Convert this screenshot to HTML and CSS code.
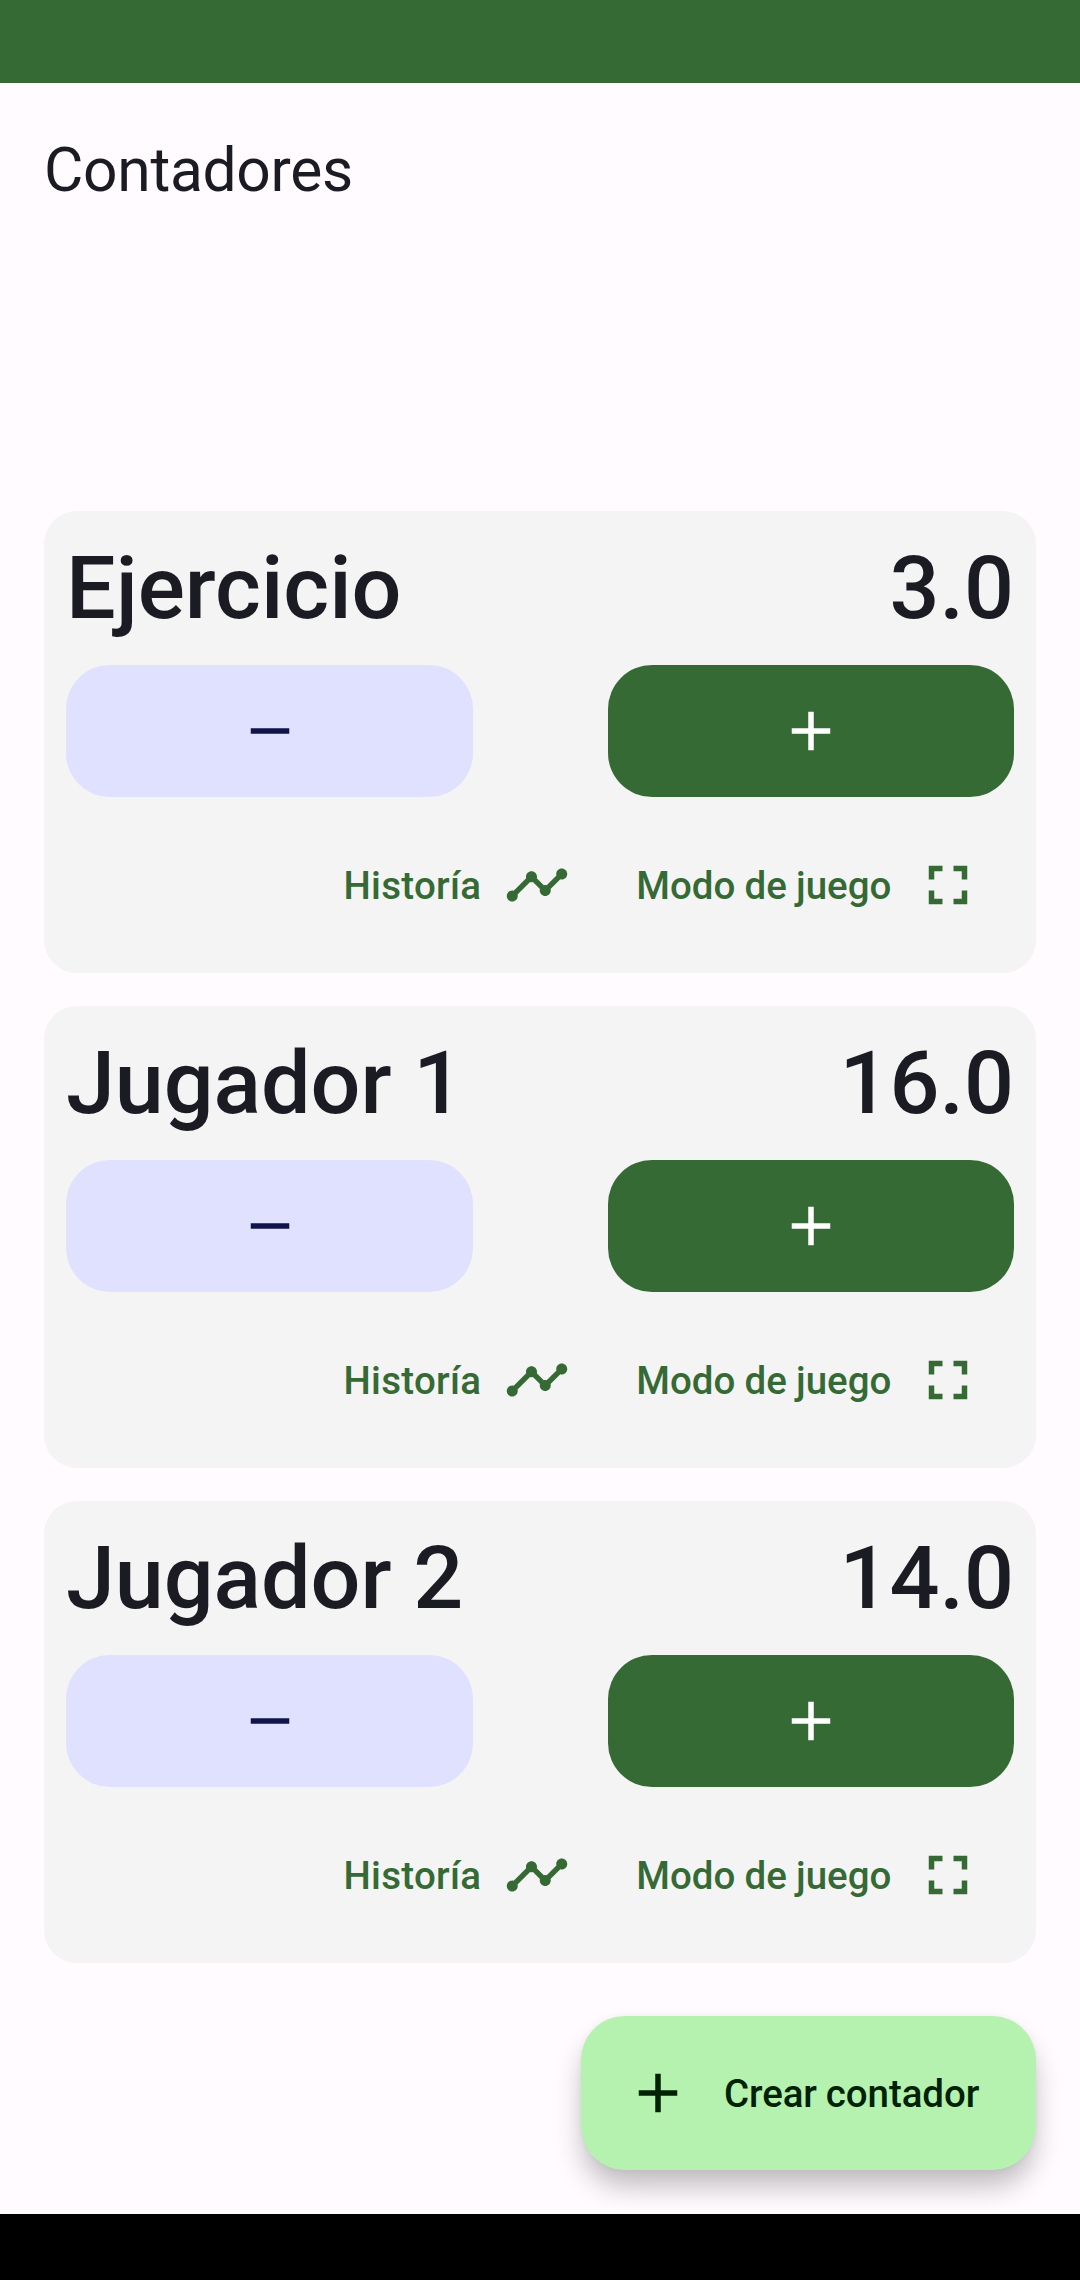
FILE: index.html
```html
<!DOCTYPE html>
<html lang="es">
<head>
<meta charset="utf-8">
<title>Contadores</title>
<link rel="stylesheet" href="styles.css">
</head>
<body>
<svg class="sprite" aria-hidden="true">
  <symbol id="minus" viewBox="0 0 24 24"><path d="M19 13H5v-2h14v2z"/></symbol>
  <symbol id="plus" viewBox="0 0 24 24"><path d="M19 13h-6v6h-2v-6H5v-2h6V5h2v6h6v2z"/></symbol>
  <symbol id="timeline" viewBox="0 0 24 24"><path d="M23 8c0 1.1-.9 2-2 2-.18 0-.35-.02-.51-.07l-3.56 3.55c.05.16.07.34.07.52 0 1.1-.9 2-2 2s-2-.9-2-2c0-.18.02-.36.07-.52l-2.55-2.55c-.16.05-.34.07-.52.07s-.36-.02-.52-.07l-4.55 4.56c.05.16.07.33.07.51 0 1.1-.9 2-2 2s-2-.9-2-2 .9-2 2-2c.18 0 .35.02.51.07l4.56-4.55C8.02 9.36 8 9.18 8 9c0-1.1.9-2 2-2s2 .9 2 2c0 .18-.02.36-.07.52l2.55 2.55c.16-.05.34-.07.52-.07s.36.02.52.07l3.55-3.56C19.02 8.35 19 8.18 19 8c0-1.1.9-2 2-2s2 .9 2 2z"/></symbol>
  <symbol id="fullscreen" viewBox="0 0 24 24"><path d="M7 14H5v5h5v-2H7v-3zm-2-4h2V7h3V5H5v5zm12 7h-3v2h5v-5h-2v3zM14 5v2h3v3h2V5h-5z"/></symbol>
</svg>
<div class="screen">
  <div class="status-bar"></div>
  <header class="app-bar"><h1 class="app-title">Contadores</h1></header>
  <main class="counters">
    <section class="card">
      <div class="card-head"><h2 class="name">Ejercicio</h2><span class="value">3.0</span></div>
      <div class="steps">
        <button class="step step-minus" aria-label="Restar"><svg class="icon"><use href="#minus"/></svg></button>
        <button class="step step-plus" aria-label="Sumar"><svg class="icon"><use href="#plus"/></svg></button>
      </div>
      <div class="actions">
        <button class="action action-history"><span>Historía</span><svg class="icon"><use href="#timeline"/></svg></button>
        <button class="action action-game"><span>Modo de juego</span><svg class="icon"><use href="#fullscreen"/></svg></button>
      </div>
    </section>
    <section class="card">
      <div class="card-head"><h2 class="name">Jugador 1</h2><span class="value">16.0</span></div>
      <div class="steps">
        <button class="step step-minus" aria-label="Restar"><svg class="icon"><use href="#minus"/></svg></button>
        <button class="step step-plus" aria-label="Sumar"><svg class="icon"><use href="#plus"/></svg></button>
      </div>
      <div class="actions">
        <button class="action action-history"><span>Historía</span><svg class="icon"><use href="#timeline"/></svg></button>
        <button class="action action-game"><span>Modo de juego</span><svg class="icon"><use href="#fullscreen"/></svg></button>
      </div>
    </section>
    <section class="card">
      <div class="card-head"><h2 class="name">Jugador 2</h2><span class="value">14.0</span></div>
      <div class="steps">
        <button class="step step-minus" aria-label="Restar"><svg class="icon"><use href="#minus"/></svg></button>
        <button class="step step-plus" aria-label="Sumar"><svg class="icon"><use href="#plus"/></svg></button>
      </div>
      <div class="actions">
        <button class="action action-history"><span>Historía</span><svg class="icon"><use href="#timeline"/></svg></button>
        <button class="action action-game"><span>Modo de juego</span><svg class="icon"><use href="#fullscreen"/></svg></button>
      </div>
    </section>
  </main>
  <div class="fab-row">
    <button class="fab"><svg class="icon"><use href="#plus"/></svg><span>Crear contador</span></button>
  </div>
  <div class="nav-bar"></div>
</div>
</body>
</html>
```

FILE: styles.css
```css
* {
  box-sizing: border-box;
}

body {
  margin: 0;
  background: #fffbff;
  color: #1b1b23;
  font-family: Roboto, sans-serif;
}

button {
  margin: 0;
  padding: 0;
  border: 0;
  background: none;
  color: inherit;
  font: inherit;
}

.sprite {
  display: none;
}

.icon {
  display: block;
  flex: none;
  width: 66px;
  height: 66px;
  fill: currentColor;
}

.screen {
  display: flex;
  flex-direction: column;
  width: 1080px;
  height: 2280px;
  overflow: hidden;
}

.status-bar {
  flex: none;
  height: 83px;
  background: #356a35;
}

.app-bar {
  flex: none;
  height: 428px;
  padding: 49px 44px 0;
}

.app-title {
  margin: 0;
  font-size: 60.5px;
  font-weight: 400;
  line-height: 77px;
  letter-spacing: -0.3px;
}

.counters {
  display: flex;
  flex-direction: column;
  gap: 33px;
  padding: 0 44px;
}

.card {
  height: 462px;
  padding: 22px;
  border-radius: 33px;
  background: #f4f4f4;
}

.card-head {
  display: flex;
  justify-content: space-between;
  height: 132px;
  font-size: 88px;
  font-weight: 500;
  line-height: 110px;
}

.name {
  margin: 0;
  font-size: inherit;
  font-weight: inherit;
  letter-spacing: -0.05px;
}

.steps {
  display: grid;
  grid-template-columns: 407px 406px;
  justify-content: space-between;
}

.step {
  display: flex;
  align-items: center;
  justify-content: center;
  height: 132px;
  border-radius: 44px;
}

.step-minus {
  background: #e0e0ff;
  color: #11144b;
}

.step-plus {
  background: #356a35;
  color: #fff;
}

.actions {
  display: flex;
  justify-content: flex-end;
  gap: 66px;
  padding: 55px 33px 0 0;
  color: #356a35;
}

.action {
  display: flex;
  align-items: center;
  font-size: 38.5px;
  font-weight: 500;
  line-height: 55px;
}

.action-history {
  gap: 23px;
  letter-spacing: 0.275px;
}

.action-game {
  gap: 23.6px;
  word-spacing: -0.4px;
}

.fab-row {
  display: flex;
  justify-content: flex-end;
  padding: 53px 44px 44px;
}

.fab {
  display: flex;
  align-items: center;
  gap: 33px;
  width: 455px;
  height: 154px;
  padding: 0 0 0 44px;
  border-radius: 44px;
  background: #b6f2af;
  color: #002204;
  font-size: 38.5px;
  font-weight: 500;
  letter-spacing: -0.1px;
  word-spacing: -0.5px;
  white-space: nowrap;
  box-shadow: 0 18px 28px -2px rgba(0, 0, 0, 0.26), 0 0 6px rgba(0, 0, 0, 0.04);
}

.nav-bar {
  position: relative;
  flex: none;
  height: 66px;
  background: #000;
}
```
